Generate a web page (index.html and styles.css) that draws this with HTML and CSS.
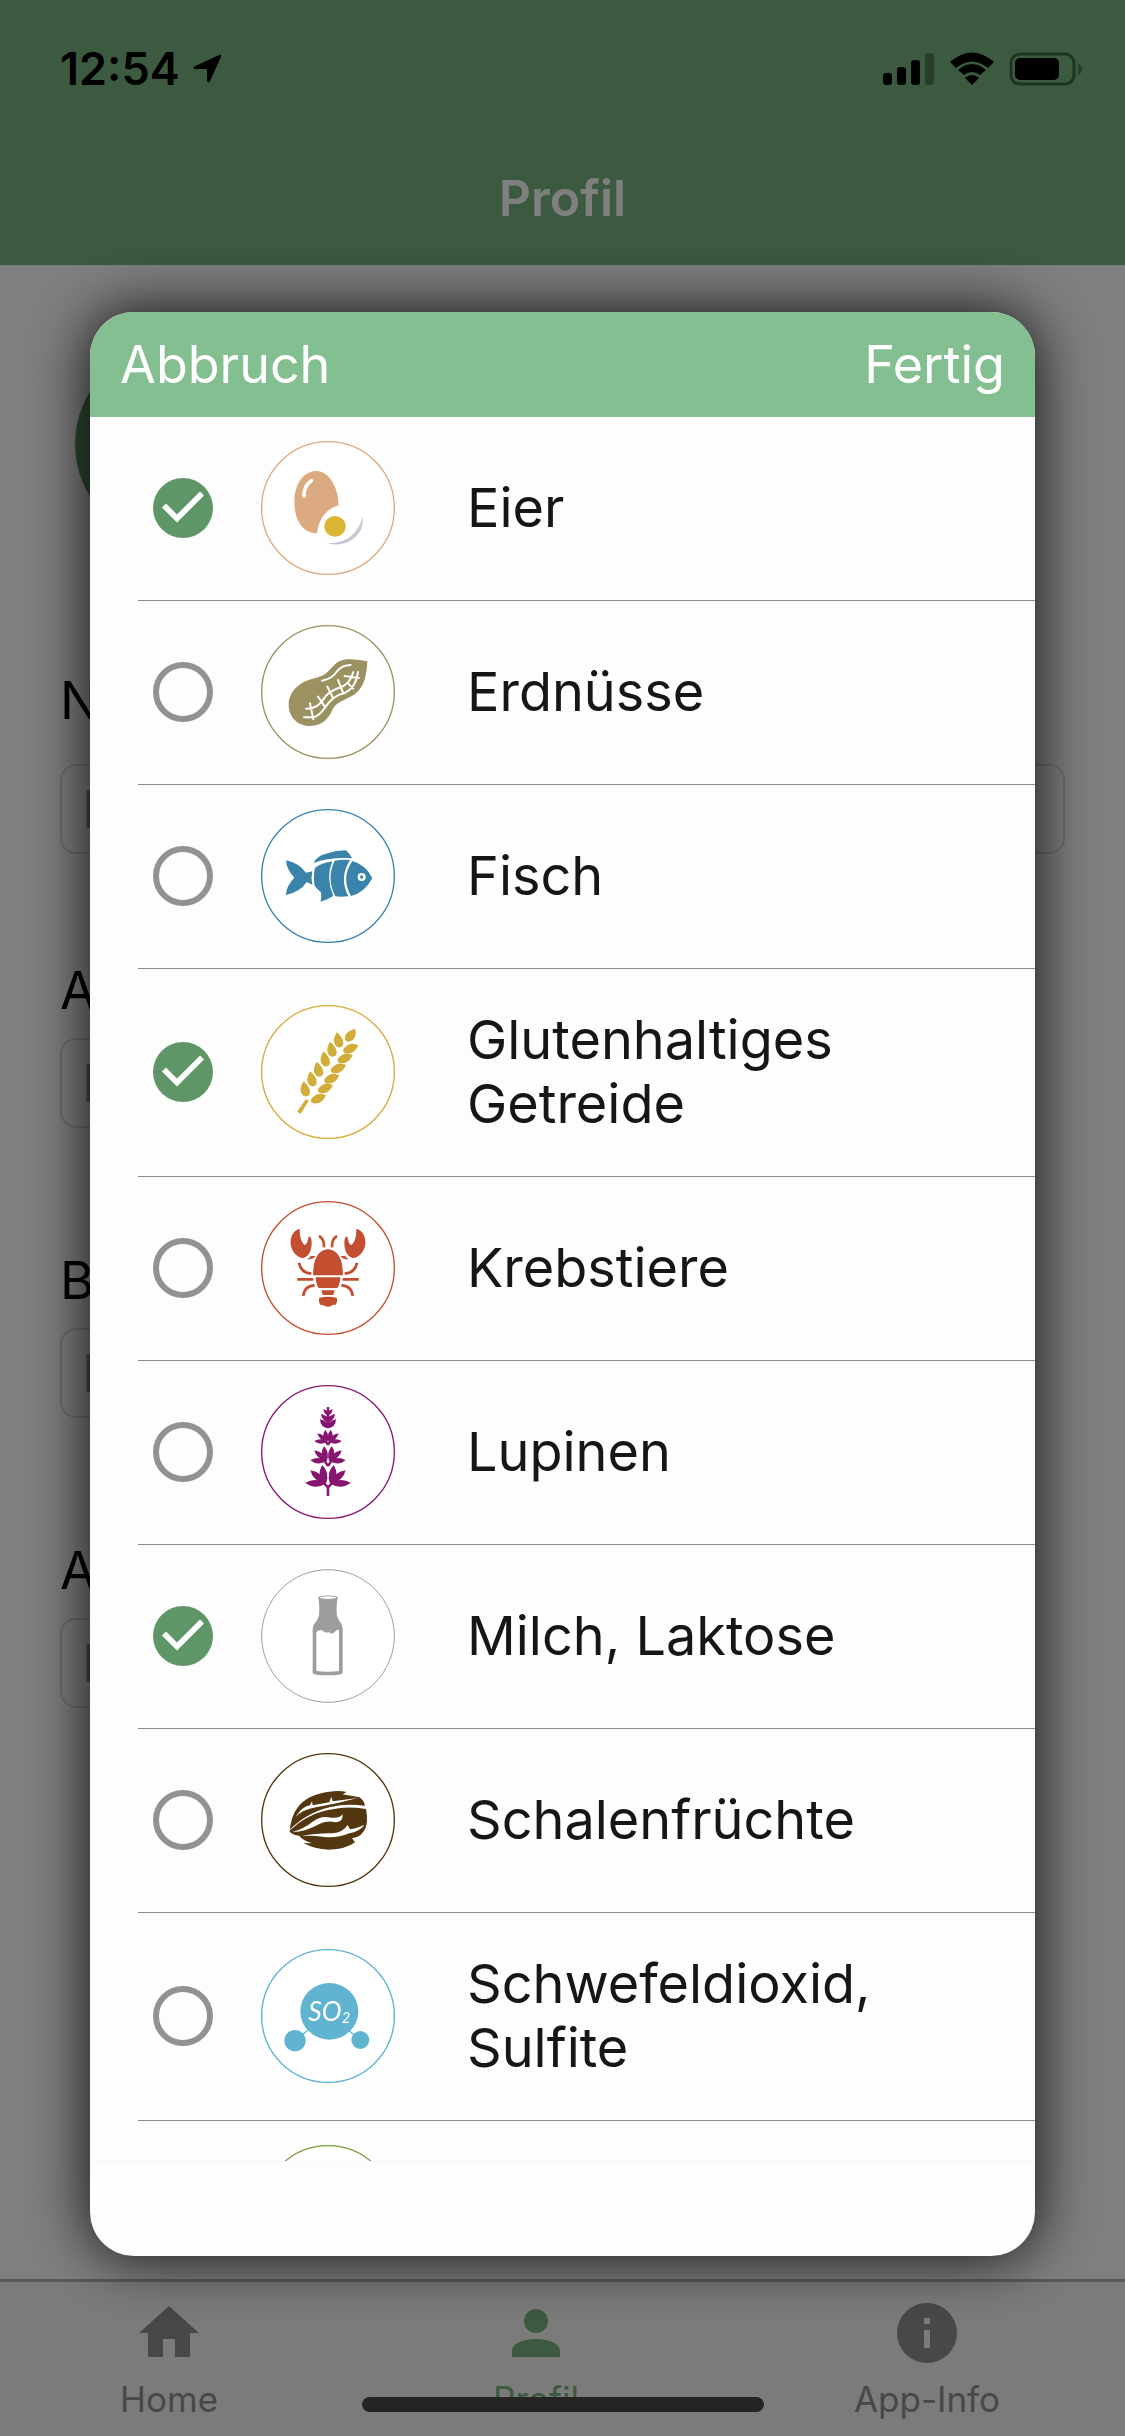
FILE: index.html
```html
<!DOCTYPE html>
<html lang="de">
<head>
<meta charset="utf-8">
<meta name="viewport" content="width=device-width, initial-scale=1">
<title>Profil</title>
<link rel="stylesheet" href="styles.css">
</head>
<body>
<div class="app">
  <header class="app-header">
    <div class="status-bar">
      <div class="status-group status-left">
        <span class="clock">12:54</span>
        <svg class="location" viewBox="0 0 32 32" aria-hidden="true"><path d="M29 1Q32 0 31 3L19 29Q17 32 16 28V17Q16 16 15 16H3Q0 15 3 13Z"/></svg>
      </div>
      <div class="status-group">
        <svg class="signal" viewBox="0 0 52 34" aria-hidden="true"><rect x="0" y="21" width="9" height="12" rx="3"/><rect x="14" y="15" width="9" height="18" rx="3"/><rect x="28" y="8" width="9" height="25" rx="3"/><rect class="faint" x="42" y="1" width="9" height="32" rx="3"/></svg>
        <svg class="wifi" viewBox="0 0 46 34" aria-hidden="true"><path d="M1 10Q23 -9 45 10L39 16Q23 3 7 16Z"/><path d="M9 18Q23 6 37 18L31 23Q23 17 15 23Z"/><path d="M16 26Q23 20 30 26L23 33Z"/></svg>
        <svg class="battery" viewBox="0 0 74 34" aria-hidden="true"><rect class="shell" x="2" y="2" width="63" height="30" rx="9"/><rect x="6" y="6" width="44" height="22" rx="5"/><path class="faint" d="M69 11Q73 13 73 17T69 23Z"/></svg>
      </div>
    </div>
    <h1 class="title">Profil</h1>
  </header>

  <main class="profile">
    <div class="avatar"></div>
    <form class="fields">
      <div class="field field-wide"><label for="f1">N</label><input id="f1" type="text" placeholder="I"></div>
      <div class="field"><label for="f2">A</label><input id="f2" type="text" placeholder="I"></div>
      <div class="field"><label for="f3">B</label><input id="f3" type="text" placeholder="I"></div>
      <div class="field"><label for="f4">A</label><input id="f4" type="text" placeholder="I"></div>
    </form>
  </main>

  <nav class="tabs">
    <a class="tab" href="#home"><svg viewBox="0 0 24 24" aria-hidden="true"><path d="M10 20v-6h4v6h5v-8h3L12 3 2 12h3v8z"/></svg><span>Home</span></a>
    <a class="tab active" href="#profil"><svg viewBox="0 0 24 24" aria-hidden="true"><path d="M12 12a4 4 0 1 0 0-8 4 4 0 0 0 0 8zm0 2c-3 0-8 1-8 4v2h16v-2c0-3-5-4-8-4z"/></svg><span>Profil</span></a>
    <a class="tab" href="#info"><svg viewBox="0 0 24 24" aria-hidden="true"><path d="M12 2a10 10 0 1 0 0 20 10 10 0 0 0 0-20zm1 15h-2v-6h2zm0-8h-2V7h2z"/></svg><span>App-Info</span></a>
  </nav>
</div>

<div class="overlay">
  <section class="dialog" role="dialog" aria-modal="true" aria-label="Allergene">
    <div class="dialog-bar">
      <button type="button">Abbruch</button>
      <button type="button">Fertig</button>
    </div>
    <ul class="list">
      <li><label class="row"><input type="checkbox" checked>
        <svg class="icon egg" viewBox="395 63 402 402" aria-hidden="true">
          <circle class="ring" cx="596" cy="264" r="199"/>
          <path d="M561 153C600 153 628 205 628 256Q572 272 563 340C520 340 495 300 495 245C495 190 525 153 561 153Z"/>
          <path class="gap" stroke-width="11" d="M524 228Q523 198 546 182"/>
          <ellipse class="yolk" cx="617" cy="319" rx="32" ry="31"/>
          <path class="shade" d="M700 288Q706 345 650 368Q620 378 596 370Q640 370 665 348Q692 325 700 288Z"/>
        </svg><span>Eier</span></label></li>
      <li><label class="row"><input type="checkbox">
        <svg class="icon peanut" viewBox="395 615 402 402" aria-hidden="true">
          <circle class="ring" cx="596" cy="816" r="199"/>
          <path d="M714 724C712 765 705 800 680 820C650 842 625 842 610 868C595 905 570 918 540 918C505 918 478 890 478 855C478 815 510 785 550 776C590 768 595 755 612 738C635 712 665 716 714 724Z"/>
          <path class="gap" stroke-width="6" d="M578 782Q610 775 622 755Q640 734 664 735M524 892H552Q572 886 586 864Q612 826 644 820Q680 804 686 756M530 866Q562 868 582 838Q596 815 628 804Q662 794 672 756M542 850L552 898M566 830L588 862M594 800L610 832M626 780L642 820M646 768L688 774M656 790L672 806"/>
        </svg><span>Erdnüsse</span></label></li>
      <li><label class="row"><input type="checkbox">
        <svg class="icon fish" viewBox="395 88 402 402" aria-hidden="true">
          <circle class="ring" cx="596" cy="289" r="199"/>
          <path d="M470 242Q508 250 530 279L549 275Q544 295 549 315L532 307Q512 338 469 346Q473 315 495 294Q471 268 470 242ZM553 250Q560 230 590 222Q620 212 650 212Q662 222 668 236Q600 232 553 250ZM557 264Q580 249 609 245Q588 295 612 349Q595 360 574 366Q577 352 575 338Q563 328 556 318Q551 290 557 264ZM616 243Q640 238 662 241Q628 295 657 350Q635 352 618 350Q590 295 616 243ZM669 244Q710 255 729 296Q705 340 665 349Q634 295 669 244Z"/>
          <circle class="white" cx="697" cy="292" r="12"/><circle cx="697" cy="292" r="5"/>
        </svg><span>Fisch</span></label></li>
      <li><label class="row tall"><input type="checkbox" checked>
        <svg class="icon wheat" viewBox="395 677 402 402" aria-hidden="true">
          <defs>
            <path id="grain-left" d="M-5 -25C10 -12 18 4 12 16Q4 23 -4 19C-20 9 -15 -12 -5 -25Z"/>
            <path id="grain-right" d="M24 -9C8 -18 -10 -14 -21 3Q-23 13 -14 15C3 19 17 8 24 -9Z"/>
          </defs>
          <circle class="ring" cx="596" cy="878" r="199"/>
          <path d="M678 749C653 754 643 768 648 783Q656 791 669 783C679 774 681 762 678 749ZM503 997L530 959L538 965L514 1003Z"/>
          <use href="#grain-left" x="628" y="784"/><use href="#grain-left" x="608" y="812"/><use href="#grain-left" x="588" y="841"/><use href="#grain-left" x="568" y="872"/><use href="#grain-left" x="548" y="901"/><use href="#grain-left" x="528" y="931"/>
          <use href="#grain-right" x="663" y="807"/><use href="#grain-right" x="646" y="836"/><use href="#grain-right" x="626" y="866"/><use href="#grain-right" x="606" y="897"/><use href="#grain-right" x="587" y="926"/><use href="#grain-right" x="566" y="957"/>
        </svg><span>Glutenhaltiges Getreide</span></label></li>
      <li><label class="row"><input type="checkbox">
        <svg class="icon lobster" viewBox="395 65 402 402" aria-hidden="true">
          <defs>
            <g id="lobster-half">
              <path d="M511 148C490 153 482 175 484 195C488 220 505 236 522 236C542 230 550 205 546 178Q543 172 538 171Q536 190 527 198Q510 185 511 148ZM534 241L545 229L559 231Q550 241 534 241Z"/>
              <path class="limb" d="M569 170Q585 178 584 204M509 250Q514 280 546 283M504 300H552M522 350Q524 320 556 318"/>
            </g>
          </defs>
          <circle class="ring" cx="596" cy="266" r="199"/>
          <use href="#lobster-half"/>
          <use href="#lobster-half" transform="translate(1192 0) scale(-1 1)"/>
          <path d="M551 288Q552 212 596 210Q640 212 641 288ZM559 294H633Q632 315 624 326H568Q560 315 559 294ZM576 333H616L612 347H580ZM570 355Q596 350 622 355Q626 368 618 377Q610 374 606 380Q596 385 586 380Q582 376 574 377Q566 368 570 355Z"/>
        </svg><span>Krebstiere</span></label></li>
      <li><label class="row"><input type="checkbox">
        <svg class="icon lupine" viewBox="395 617 402 402" aria-hidden="true">
          <defs>
            <path id="petals" d="M0 0Q-30 -26 -8 -56Q14 -28 2 0ZM0 0Q-38 -8 -45 -40Q-8 -34 2 0ZM0 0Q-32 20 -60 -3Q-28 -20 0 0Z"/>
            <g id="lupine-half">
              <use href="#petals" transform="translate(588 913)"/>
              <use href="#petals" transform="translate(591 845) scale(.8)"/>
              <use href="#petals" transform="translate(593 787) scale(.64)"/>
              <path d="M597 747Q573 745 572 720Q590 724 597 735ZM597 729Q577 724 575 704Q591 707 597 718ZM597 710Q583 704 582 689Q593 692 597 700Z"/>
              <path class="stem" d="M596 950V924L582 910M596 860L586 845M596 797L588 784M596 746V684"/>
            </g>
          </defs>
          <circle class="ring" cx="596" cy="818" r="199"/>
          <use href="#lupine-half"/>
          <use href="#lupine-half" transform="translate(1192 0) scale(-1 1)"/>
        </svg><span>Lupinen</span></label></li>
      <li><label class="row"><input type="checkbox" checked>
        <svg class="icon milk" viewBox="395 58 402 402" aria-hidden="true">
          <circle class="ring" cx="596" cy="259" r="199"/>
          <path d="M567 141Q596 134 625 141L623 158Q618 198 630 214Q640 225 640 240V370Q638 377 596 377Q552 377 550 370V240Q550 225 562 214Q573 198 569 158Z"/>
          <ellipse class="white" cx="596" cy="144" rx="24" ry="4"/>
          <path class="white" d="M561 247Q572 238 580 243Q590 252 598 247Q606 256 616 247Q620 240 629 240V364Q596 369 561 364Z"/>
        </svg><span>Milch, Laktose</span></label></li>
      <li><label class="row"><input type="checkbox">
        <svg class="icon walnut" viewBox="395 609 402 402" aria-hidden="true">
          <circle class="ring" cx="596" cy="810" r="199"/>
          <path d="M481 845C486 800 500 750 570 731Q620 718 652 726L640 733L690 742Q705 752 706 765Q718 800 710 830Q700 860 668 865L677 877Q650 898 598 899Q555 897 522 879L548 880Q515 868 510 857Q490 855 481 845Z"/>
          <path class="white" d="M478 842Q540 780 620 768Q660 760 710 768V777Q650 768 610 778Q540 788 486 838ZM498 802Q520 768 542 766L548 754L550 766L600 757L606 740L610 754L685 744Q620 762 560 772Q520 778 498 802ZM488 847Q525 835 550 815Q575 795 605 803Q630 806 640 793Q642 815 620 817Q590 810 570 822Q530 845 488 847ZM516 858Q570 848 610 850Q640 848 655 825L662 838Q690 832 706 824Q690 845 660 850Q620 866 580 860Q550 856 516 858Z"/>
        </svg><span>Schalenfrüchte</span></label></li>
      <li><label class="row tall"><input type="checkbox">
        <svg class="icon sulfite" viewBox="395 88 402 402" aria-hidden="true">
          <circle class="ring" cx="596" cy="289" r="199"/>
          <ellipse cx="600" cy="275" rx="87" ry="85"/><circle cx="497" cy="363" r="32"/><circle cx="693" cy="361" r="27"/>
          <path class="bond" d="M497 363L540 328M693 361L660 334"/>
          <text x="537" y="303">SO<tspan class="sub" dy="7">2</tspan></text>
        </svg><span>Schwefeldioxid, Sulfite</span></label></li>
      <li><label class="row"><input type="checkbox" aria-label="Sellerie">
        <svg class="icon celery" viewBox="0 0 402 402" aria-hidden="true"><circle class="ring" cx="201" cy="201" r="199"/></svg></label></li>
    </ul>
    <div class="dialog-foot"></div>
  </section>
</div>
<div class="home-indicator"></div>
</body>
</html>
```
FILE: styles.css
```css
* { box-sizing: border-box; }

body {
  margin: 0;
  font-family: Inter, "Liberation Sans", sans-serif;
  font-size: 52px;
  color: #000;
  background: #fff;
}

.app {
  display: flex;
  flex-direction: column;
  min-height: 100vh;
}

/* Header with status bar */
.app-header { background: #78b480; height: 265px; }

.status-bar {
  display: flex;
  justify-content: space-between;
  align-items: center;
  height: 138px;
  padding: 0 42px 0 60px;
}

.status-group { display: flex; align-items: center; gap: 14px; }
.status-left { gap: 12px; }
.clock { font-size: 45px; font-weight: 600; line-height: 52px; }
.location { width: 30px; height: 30px; }
.signal { width: 52px; height: 34px; }
.wifi { width: 46px; height: 34px; }
.battery { width: 74px; height: 34px; }
.shell { fill: none; stroke: #3a6a42; stroke-width: 3; }
.faint { fill: #4d7d55; }

.title {
  margin: 0;
  padding-top: 28px;
  font-size: 50px;
  line-height: 64px;
  font-weight: 600;
  text-align: center;
  color: #fff;
}

/* Profile form */
.profile { flex: 1; padding: 79px 60px 0; }

.avatar {
  width: 200px;
  height: 200px;
  margin-left: 15px;
  border-radius: 50%;
  background: #5f9667;
}

.fields { display: flex; flex-direction: column; gap: 121px; margin-top: 125px; }
.field { display: flex; flex-direction: column; gap: 15px; width: 50%; }
.field-wide { gap: 31px; width: 100%; margin-bottom: -16px; }
.field label { line-height: 64px; }

.field input {
  width: 100%;
  height: 90px;
  padding: 0 20px;
  border: 2px solid #dcdcdc;
  border-radius: 16px;
  background: transparent;
  font: inherit;
}
.field input::placeholder { color: #999; opacity: 1; }

/* Tab bar */
.tabs {
  display: flex;
  justify-content: space-between;
  height: 157px;
  padding: 15px 125px 0 120px;
  border-top: 3px solid #b4b4b4;
  background: #f6f6f6;
}

.tab {
  display: flex;
  flex-direction: column;
  align-items: center;
  gap: 8px;
  font-size: 35px;
  line-height: 44px;
  color: #909090;
  text-decoration: none;
}
.tab svg { width: 72px; height: 72px; fill: currentColor; }
.tab.active { color: #78b480; }

/* Dialog */
.overlay {
  position: fixed;
  inset: 0;
  display: flex;
  padding: 312px 8% 180px;
  background: rgba(0, 0, 0, .5);
}

.dialog {
  flex: 1;
  display: flex;
  flex-direction: column;
  overflow: hidden;
  border-radius: 44px;
  background: #fdfdfd;
  box-shadow: 0 0 60px rgba(0, 0, 0, .9);
}

.dialog-bar {
  display: flex;
  justify-content: space-between;
  align-items: center;
  height: 105px;
  flex: none;
  padding: 0 30px;
  background: #84bf92;
}

.dialog-bar button {
  padding: 0;
  border: 0;
  background: none;
  font: inherit;
  line-height: 64px;
  color: #fff;
}

.list {
  flex: 1;
  min-height: 0;
  margin: 0;
  padding: 0 0 0 48px;
  overflow-y: auto;
  scrollbar-width: none;
  list-style: none;
}

.row {
  display: flex;
  align-items: center;
  height: 184px;
  padding: 0 24px 2px 15px;
  border-bottom: 1px solid #8a8a8a;
  color: #161616;
  font-size: 54px;
  line-height: 64px;
}
.row.tall { height: 208px; }

.row input {
  appearance: none;
  flex: none;
  width: 60px;
  height: 60px;
  margin: 0;
  border: 6px solid #929292;
  border-radius: 50%;
}

.row input:checked { border: 0; background: #5f9667; }

.row input:checked::before {
  content: "";
  display: block;
  width: 60px;
  height: 60px;
  background: #fff;
  clip-path: polygon(9px 30px, 13px 26px, 24px 37px, 47px 14px, 51px 18px, 24px 45px);
}

.row span { margin-left: 72px; flex: 1; }

/* Allergen icons */
.icon { flex: none; width: 134px; height: 134px; margin-left: 48px; color: #999; fill: currentColor; }
.ring { fill: #fff; stroke: currentColor; stroke-width: 4; }
.white { fill: #fff; }
.gap { fill: none; stroke: #fff; stroke-linecap: round; }
.egg { color: #dcaa80; }
.yolk { fill: #dcb534; }
.shade { fill: #c4c9d2; }
.peanut { color: #9c9160; }
.fish { color: #3a84ac; }
.wheat { color: #d2ad3a; }
.lobster { color: #c44e30; }
.limb { fill: none; stroke: currentColor; stroke-width: 8; }
.lupine { color: #86166f; }
.stem { fill: none; stroke: currentColor; stroke-width: 7; }
.milk { color: #9d9d9d; }
.milk .ring { stroke-width: 3; }
.walnut { color: #523710; }
.sulfite { color: #60b4cf; }
.bond { stroke: currentColor; stroke-width: 4; }
.sulfite text { font: italic 80px Lato, "Open Sans", sans-serif; fill: #fff; }
.sulfite .sub { font-size: 44px; }
.celery { color: #7d9a45; }

.dialog-foot { height: 95px; flex: none; border-top: 1px solid #f6f6f6; }

.home-indicator {
  position: fixed;
  bottom: 24px;
  left: 50%;
  width: 402px;
  height: 15px;
  margin-left: -201px;
  border-radius: 8px;
  background: #242424;
}
```
